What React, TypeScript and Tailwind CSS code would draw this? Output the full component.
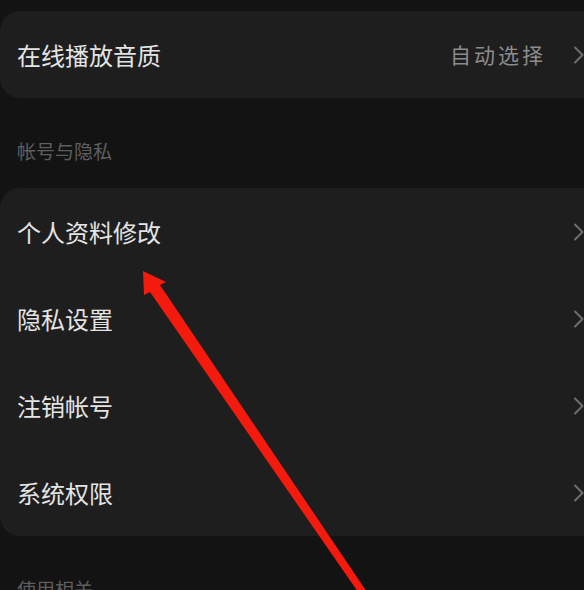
const accountRows = ['个人资料修改', '隐私设置', '注销帐号', '系统权限'];

function Chevron() {
    return (
        <svg width="12" height="18" viewBox="0 0 12 18" fill="none" className="shrink-0">
            <path d="M2 1.5L9.5 9L2 16.5" stroke="#6e6e6e" strokeWidth="2" strokeLinecap="round" strokeLinejoin="round" />
        </svg>
    );
}

function SectionTitle({ children }: { children: string }) {
    return (
        <div className="h-[90px] pl-[17px] pt-[41px] text-[19px] leading-[24px] text-[#5e5e5e]">{children}</div>
    );
}

function Row({ label, value }: { label: string; value?: string }) {
    return (
        <div className="flex h-[87px] items-center pl-[17px] pr-[17px]">
            <span className="flex-1 text-[24px] leading-[30px] text-[#e4e4e4]">{label}</span>
            {value ? <span className="mr-[27px] text-[21px] tracking-[3px] text-[#8c8c8c]">{value}</span> : null}
            <Chevron />
        </div>
    );
}

export default function App() {
    return (
        <div
            className="relative h-[590px] w-[584px] overflow-hidden bg-[#131313] pt-[11px]"
            style={{ fontFamily: '"Noto Sans CJK SC", "Noto Sans", sans-serif' }}
        >
            <div className="mr-[-18px] rounded-[20px] bg-[#1e1e1e]">
                <Row label="在线播放音质" value="自动选择" />
            </div>

            <SectionTitle>帐号与隐私</SectionTitle>

            <div className="mr-[-18px] rounded-[20px] bg-[#1e1e1e]">
                {accountRows.map((label) => (
                    <Row key={label} label={label} />
                ))}
            </div>

            <SectionTitle>使用相关</SectionTitle>

            {/* red annotation arrow drawn over the screenshot */}
            <svg className="pointer-events-none absolute left-0 top-0" width="584" height="590" viewBox="0 0 584 590">
                <polygon
                    points="143,271 166,282 160,285 371,598 365,602 150,292 144,295"
                    fill="#f41a0e"
                />
            </svg>
        </div>
    );
}
